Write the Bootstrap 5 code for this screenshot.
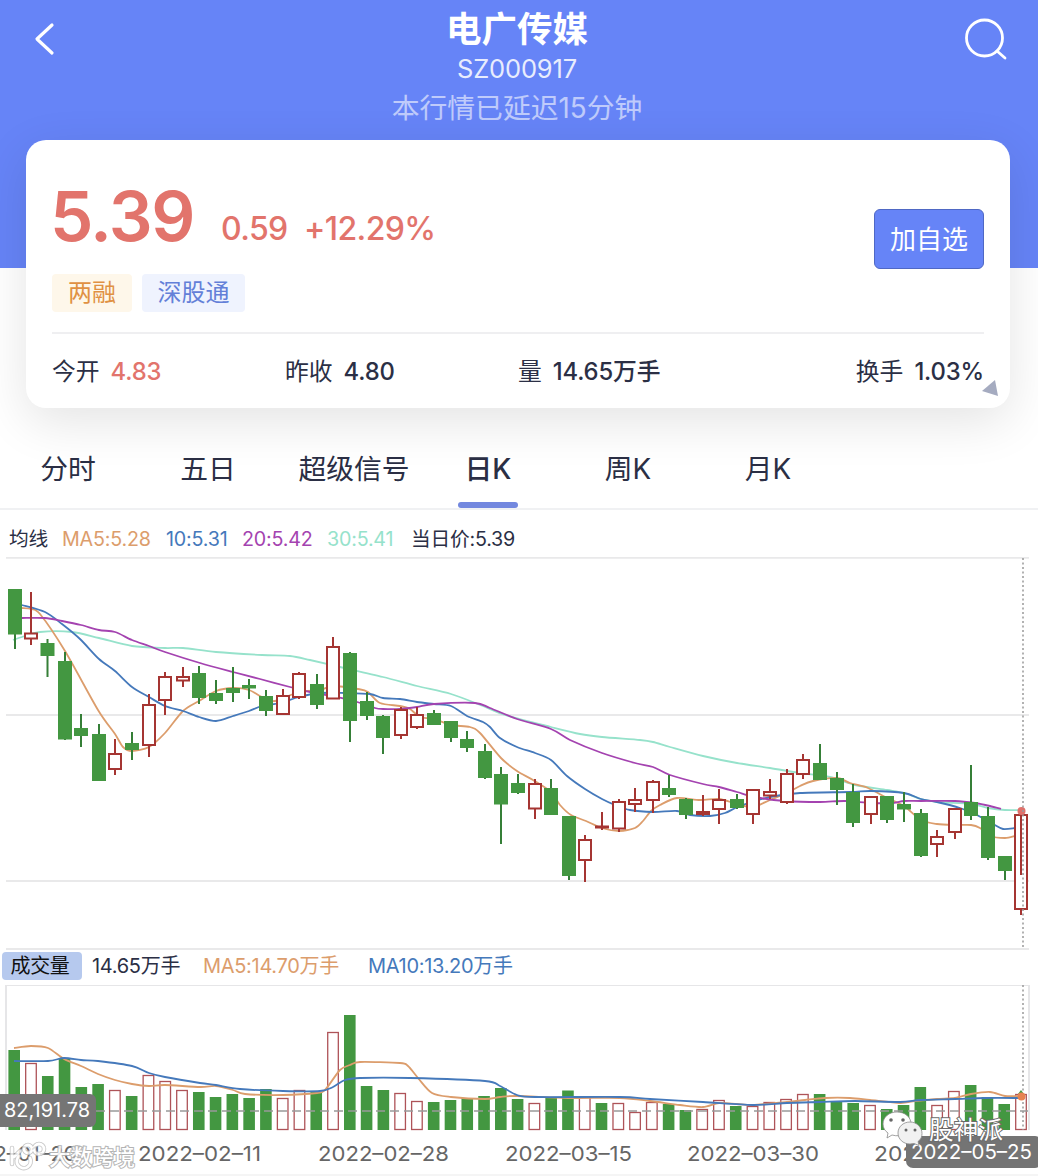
<!DOCTYPE html>
<html lang="zh-CN">
<head>
<meta charset="utf-8">
<meta name="viewport" content="width=device-width, initial-scale=1">
<title>电广传媒 SZ000917</title>
<link href="https://cdn.jsdelivr.net/npm/bootstrap@5.3.0/dist/css/bootstrap.min.css" rel="stylesheet">
<style>
  :root { --brand:#6684f7; --ink:#2b2f45; --up:#e2746c; --or:#dc9d6c; --bl:#4579bb; --pu:#a443b0; --gr:#96e2cb; }
  body { font-family: Inter, "Noto Sans CJK SC", sans-serif; color: var(--ink); background:#fff; width:1038px; height:1176px; overflow:hidden; white-space:nowrap; }
  .hero { background: var(--brand); height:268px; padding:0 30px; }
  .hero-title { font-size:35.5px; font-weight:700; line-height:44px; margin-top:8px; }
  .hero-code { font-size:25.5px; line-height:32px; margin-top:1px; letter-spacing:-.15px; opacity:.85 }
  .hero-note { font-size:27.8px; line-height:40px; margin-top:3px; opacity:.58; letter-spacing:0 }
  .hero-mid { padding-right:0; }
  .quote { margin:-128px 28px 0 26px; height:268px; border-radius:20px; background:#fff; padding:0 26px; box-shadow:0 14px 50px rgba(0,0,0,.11); position:relative; }
  .quote-top { height:132px; padding-top:36px; }
  .price { font-size:69px; font-weight:600; line-height:80px; letter-spacing:-1.6px; color:var(--up); width:139px; margin-left:-2px; }
  .delta { font-size:32px; font-weight:500; line-height:80px; letter-spacing:-.6px; color:var(--up); padding-top:13px; }
  .delta-abs { margin-left:32px; width:83px; }
  .add-btn { width:110px; height:60px; margin-top:33px; background:var(--brand); border:1px solid #4f68c4; border-radius:6px; font-size:26px; color:#fff; padding:0; }
  .tags { gap:10px; padding-top:2px; }
  .tag { height:38px; line-height:37px; font-size:24px; border-radius:4px; text-align:center; }
  .tag-a { width:80px; background:#fef7ea; color:#e09143; }
  .tag-b { width:103px; background:#eff3fe; color:#6380d8; }
  .facts { height:76px; border-top:2px solid #efeff1; margin-top:20px; font-size:23.8px; line-height:76px; }
  .facts > .fact { width:233px; }
  .facts b { font-weight:500; margin-left:11px; letter-spacing:-.15px }
  .corner { right:11px; bottom:11px; }
  .tabs { height:102px; border-bottom:2px solid #f0f1f3; font-size:27.8px; }
  .tabs a { color:var(--ink); text-decoration:none; width:140px; line-height:122px; height:102px; text-align:center; padding-right:4px; }
  .tabs a.wide { padding:0 0 0 8px; }
  .tabs .on { font-weight:500; }
  .tabs .on span { display:block; width:60px; height:6px; border-radius:3px; background:#7388df; margin:-28px auto 0; }
  .legend { height:47px; line-height:58px; font-size:19.7px; letter-spacing:-.2px; padding-left:9px; }
  .vol-legend { height:35px; line-height:32px; font-size:20px; letter-spacing:-.3px; padding-left:2px; }
  .vol-chip { background:#b6c9ee; color:#111; border-radius:4px; width:80px; height:28px; line-height:28px; text-align:center; margin-top:2px; padding-right:4px; }
  svg { display:block; }
  svg text { font-family: Inter, "Noto Sans CJK SC", sans-serif; }
</style>
<script src="https://cdn.jsdelivr.net/npm/bootstrap@5.3.0/dist/js/bootstrap.bundle.min.js"></script>
</head>
<body>
<header class="hero d-flex justify-content-between text-white">
  <svg width="40" height="80" fill="none" stroke="#fff" stroke-width="3.2" stroke-linecap="round" stroke-linejoin="round"><path d="M22 25 7 39 22 53"/></svg>
  <div class="text-center hero-mid">
    <div class="hero-title">电广传媒</div>
    <div class="hero-code">SZ000917</div>
    <div class="hero-note">本行情已延迟15分钟</div>
  </div>
  <svg width="44" height="80" fill="none" stroke="#fff" stroke-width="2.8" stroke-linecap="round"><circle cx="20.500" cy="38" r="18"/><path d="M33 51 41 58"/></svg>
</header>

<section class="quote">
  <div class="quote-top d-flex justify-content-between">
    <div class="d-flex">
      <div class="price">5.39</div>
      <div class="delta delta-abs">0.59</div>
      <div class="delta">+12.29%</div>
    </div>
    <button class="btn add-btn" type="button">加自选</button>
  </div>
  <div class="tags d-flex">
    <div class="tag tag-a">两融</div><div class="tag tag-b">深股通</div>
  </div>
  <div class="facts d-flex">
    <div class="fact">今开<b style="color:var(--up)">4.83</b></div>
    <div class="fact">昨收<b>4.80</b></div>
    <div class="flex-grow-1">量<b>14.65万手</b></div>
    <div>换手<b>1.03%</b></div>
  </div>
  <svg class="corner position-absolute" width="17" height="18"><path d="M13 1 16 17 0 12Z" fill="#a5abc0"/></svg>
</section>

<nav class="tabs d-flex">
  <a href="#">分时</a><a href="#">五日</a><a class="wide" href="#">超级信号</a><a class="on" href="#">日K<span></span></a><a href="#">周K</a><a href="#">月K</a>
</nav>

<div class="legend d-flex">
  <div style="width:53px">均线</div><div style="width:104px;color:var(--or)">MA5:5.28</div><div style="width:76px;color:var(--bl)">10:5.31</div><div style="width:85px;color:var(--pu)">20:5.42</div><div style="width:84px;color:var(--gr)">30:5.41</div><div>当日价:5.39</div>
</div>

<svg id="kline" width="1038" height="393" viewBox="0 557 1038 393"></svg>

<div class="vol-legend d-flex">
  <div class="vol-chip">成交量</div><div style="width:112px;padding-left:10px">14.65万手</div><div style="width:165px;padding-left:9px;color:var(--or)">MA5:14.70万手</div><div style="padding-left:9px;color:var(--bl)">MA10:13.20万手</div>
</div>

<svg id="volume" width="1038" height="191" viewBox="0 985 1038 191"></svg>

<script>
const GREEN = '#439741', RED = '#a53532';
/* centre x, up(1)/down(0), body top, body bottom, high, low */
const candles = [
[15,0,589,634.5,589,649],[31,1,633.5,638.5,592,645],[47.500,0,643,656,639,677],[65,0,661,739.5,652,740],[81,0,728,736,714,747],
[99,0,734,781,724,781],[115,1,754,769,739,775],[132,0,743,750,732,760],[149,1,705,745,694,757],[165,1,677,700,672,715],
[183,1,677,680.5,667,687],[199,0,673,698,666,704],[216,0,693,701,680,704],[233,0,688,693,667,702],[249,0,685,688.5,679,699],
[266,0,696,711,690,716],[283,1,696,714,689,715],[299,1,674,697,672,699],[317,0,684,705,674,709],[333,1,647,698.500,637,699],
[350,0,653,721,652,742],[367,0,701,716,692,720],[383,0,716,738,715,754],[401,1,710,735,707,739],[417,1,715,727,707,729],
[434,0,713,725,710,725],[451,0,721,738,721,742],[467,0,739,748,731,752],[485,0,751,778,744,779],[501,0,774,804.5,767,844],
[518,0,783,793,774,794],[535,1,784,808.5,779,819],[551,0,788,815,779,815],[569,0,816,876,816,880],[585,1,840,860,835,882],
[602,1,826.500,827.5,812,830],[619,1,802,828.5,799,832],[635,1,800,804,788,812],[653,1,782,800,780,813],[669,0,788,795,775,797],
[686,0,799,815,798,819],[703,1,812,814,795,816],[719,1,800,809,789,824],[737,0,799,808,794,809],[753,1,790,814,789,824],
[770,1,792,795.5,779,799],[787,1,774,802,769,804],[803,1,760,774,754,779],[820,0,763,780,744,780],[837,0,778,790,772,805],
[853,0,792,823,784,827],[871,1,797,814,797,824],[887,0,796,820,796,823],[904,0,804,809.500,792,822],[921,0,813,856,809,857],
[937,1,837,844,830,857],[955,1,809,832,808,839],[971,0,802,816,765,820],[988,0,816,858,807,860],[1005,0,856,871,856,880]];
const lines = {
 '#96e2cb':'13,640 22,637 40,632 72,632 99,638 132,646 165,648 183,648 216,652 262,655 290,656 310,660 340,667 383,677 417,686 451,694 483,706 505,715 551,727 580,734 602,737 640,740 653,742 670,747 703,756 737,763 770,768 800,773 830,777 855,785 887,790 904,793 921,799 937,802 971,804 988,808 1005,810 1021,810',
 '#dc9d6c':'22,608 31,609 40,614 65,651 98,710 115,734 123,747 132,751 149,747 165,733 183,711 199,701 216,691 233,688 249,690 262,697 275,701 299,692 320,690 333,686 358,689 368,692 380,703 400,706 410,709 420,717 434,719 451,725 470,727 480,733 501,758 517,771 533,780 551,792 560,805 571,815 586,821 602,828 619,831 635,828 643,821 651,811 660,805 677,798 700,800 719,799 737,804 753,807 770,800 787,793 800,786 813,781 837,778 850,783 868,788 887,798 904,806 921,820 937,824 955,825 971,825 980,828 990,836 1005,838 1015,836',
 '#4579bb':'22,605 45,612 62,624 80,639 99,659 115,671 132,687 149,697 165,706 183,711 199,717 216,721 233,716 249,711 262,706 280,703 299,697 320,693 345,693 370,694 383,698 400,699 417,702 434,704 451,706 467,716 483,722 490,727 500,738 517,747 535,753 551,760 567,776 585,789 602,799 615,805 630,810 653,812 677,811 690,815 710,816 725,813 740,806 770,797 800,793 850,792 871,791 904,793 921,799 937,802 960,808 977,815 993,824 1003,829 1015,828',
 '#a443b0':'22,618 45,618 62,621 81,625 99,630 115,632 132,640 149,646 165,652 200,663 233,672 260,679 290,687 310,692 350,700 375,708 383,709 400,709 417,707 434,704 475,703 490,708 517,719 551,729 570,740 602,753 635,763 653,767 670,775 703,784 719,787 737,792 755,797 785,801 820,802 845,801 871,803 893,803 904,801 921,801 955,801 975,803 990,806 1001,809'
};
const volOrange='14,1048 31,1046 48,1048 64,1059 81,1066 98,1074 115,1080 132,1084 149,1086 165,1085 200,1087 216,1086 233,1090 245,1094 283,1095 317,1093 325,1090 340,1070 350,1065 360,1062 400,1063 408,1066 418,1078 432,1093 451,1097 485,1099 500,1097 517,1096 568,1098 620,1098 650,1101 680,1105 703,1107 719,1103 737,1104 753,1105 787,1102 805,1100 825,1098 850,1098 870,1100 900,1103 915,1101 937,1099 955,1098 971,1094 990,1092 1005,1096 1021,1096';
const volBlue='14,1061 48,1061 64,1058 81,1060 98,1061 132,1066 149,1073 165,1077 200,1083 216,1085 240,1089 283,1091 320,1091 333,1087 345,1080 360,1078 410,1078 485,1081 500,1086 517,1095 535,1097 620,1097 650,1099 703,1102 753,1105 787,1103 820,1102 855,1101 900,1102 921,1100 955,1099 985,1098 1021,1098';
const tops=[1050,1063,1076,1059,1087,1084,1090,1096,1075,1081,1090,1092,1097,1094,1098,1089,1098,1090,1092,1032,1015,1086,1090,1093,1101,1102,1100,1098,1096,1088,1099,1103,1097,1090.5,1097,1103,1103,1112,1102,1104,1110,1109,1100,1106,1106,1102,1099,1094,1094,1101,1103,1105,1109,1105,1087,1105,1091,1085,1097,1104,1094];
const volUp=new Set([1,6,8,9,10,16,17,19,23,24,31,34,36,37,38,41,42,44,45,46,47,51,55,56,60]);

/* Catmull-Rom smoothing of a point list */
function smooth(str, color){
  const p=str.split(' ').map(s=>s.split(',').map(Number)); let d='M'+p[0];
  for(let i=0;i<p.length-1;i++){const a=p[i-1]||p[i],b=p[i],c=p[i+1],e=p[i+2]||c;
    d+=`C${b[0]+(c[0]-a[0])/7},${b[1]+(c[1]-a[1])/7} ${c[0]-(e[0]-b[0])/7},${c[1]-(e[1]-b[1])/7} ${c}`;}
  return `<path d="${d}" fill="none" stroke="${color}" stroke-width="1.8"/>`;
}
let k='';
for(const y of [557.8,715,881,949]) k+=`<path d="M6 ${y}H1029" stroke="#e9e9ea" stroke-width="1.8"/>`;
for(const c in lines) k+=smooth(lines[c],c);
for(const [x,up,t,b,h,l] of candles){
  if(up) k+=`<path d="M${x} ${h}V${t}M${x} ${b}V${l}" stroke="${RED}" stroke-width="2"/><rect x="${x-6}" y="${t}" width="12" height="${b-t}" fill="#fff" stroke="${RED}" stroke-width="2"/>`;
  else k+=`<path d="M${x} ${h}V${l}" stroke="#357f37" stroke-width="2"/><rect x="${x-7}" y="${t}" width="14" height="${b-t}" fill="${GREEN}"/>`;
}
k+=`<rect x="1015" y="815" width="12" height="94" fill="#fff" stroke="${RED}" stroke-width="2"/><path d="M1021 815V875M1021 909V915" stroke="${RED}" stroke-width="2"/><circle cx="1021.5" cy="811" r="4" fill="#e0716b"/><path d="M1023 558V948" stroke="#999" stroke-width="1.5" stroke-dasharray="2 2.500"/>`;
document.getElementById('kline').innerHTML=k;

let v='<path d="M6 1130V985H1029V1130" fill="none" stroke="#e6e6e8" stroke-width="2"/>';
tops.forEach((t,i)=>{const x=14.2+16.780*i;
  v+= volUp.has(i) ? `<rect x="${x-5.3}" y="${t+.5}" width="10.600" height="${1129-t}" fill="#fff" stroke="#ae5358" stroke-width="1.300"/>` : `<rect x="${x-5.8}" y="${t}" width="11.600" height="${1130-t}" fill="${GREEN}"/>`;});
v+='<path d="M96 1111H1028" stroke="#999" stroke-width="1.6" stroke-dasharray="9 5"/>';
v+=smooth(volOrange,'#dc9d6c')+smooth(volBlue,'#4579bb');
v+='<path d="M1023 985V1130" stroke="#999" stroke-width="1.5" stroke-dasharray="2 2.500"/><path d="M1018 1094l3-4 3 4" fill="#439741"/><circle cx="1021.500" cy="1096.5" r="4" fill="#e68350"/>';
const date=(x,w,s)=>`<text x="${x}" y="1160.500" font-size="20.500" fill="#666" textLength="${w}" lengthAdjust="spacingAndGlyphs">${s}</text>`;
v+=date(-46,123,'2022–01–20')+date(138,123,'2022–02–11')+date(318,131,'2022–02–28')+date(505,127,'2022–03–15')+date(687,132,'2022–03–30')+date(874,132,'2022–04–14');
v+='<path d="M0 1175H1038" stroke="#f2f2f2" stroke-width="1.5"/>';
v+='<rect x="-6" y="1094" width="102" height="33" rx="6" fill="#757575"/><text x="4" y="1117" font-size="19.500" fill="#fff" textLength="86" lengthAdjust="spacingAndGlyphs">82,191.78</text>';
v+='<rect x="906" y="1136" width="136" height="32" rx="7" fill="#747474"/><text x="911" y="1159" font-size="20.500" fill="#fff" textLength="121" lengthAdjust="spacingAndGlyphs">2022–05–25</text>';
/* platform watermark, lower left */
const mark='<path d="M12 1148V1164M14 1157 20 1151M19 1156A7 7 0 1 0 30 1158"/><circle cx="28" cy="1149" r="4"/><circle cx="39" cy="1149" r="5"/>';
v+=`<g opacity=".8" fill="none" stroke-linecap="round"><g stroke="#bbb" stroke-width="4.500">${mark}</g><g stroke="#fff" stroke-width="2.800">${mark}</g></g><text x="49" y="1165" opacity=".88" font-size="21.500" font-weight="500" fill="#fff" stroke="#aaa" stroke-width="2" paint-order="stroke" textLength="86">大数跨境</text>`;
/* chat bubbles and account name, lower right */
v+=`<g fill="#fff" stroke="#8a8a8a" stroke-width=".8"><path d="M897 1112c-8 0-14 5-14 12 0 4 2 7 5 9l-1 5 5-3c10 3 19-3 19-11 0-7-6-12-14-12Z"/><path fill="#f1f1f1" d="M910 1122c-7 0-12 5-12 11s5 11 12 11l4-.5 5 2-1-4c3-2 4-5 4-8 0-6-5-11.500-12-11.500Z"/></g><g fill="#666"><circle cx="891" cy="1120" r="1.800"/><circle cx="903" cy="1120" r="1.800"/><circle cx="906" cy="1130" r="1.500"/><circle cx="915" cy="1130" r="1.500"/></g>`;
v+='<text x="929" y="1139" font-size="24.500" fill="#fff" stroke="#6b6b6b" stroke-width="2" paint-order="stroke" textLength="74">股神派</text>';
document.getElementById('volume').innerHTML=v;
</script>
</body>
</html>
